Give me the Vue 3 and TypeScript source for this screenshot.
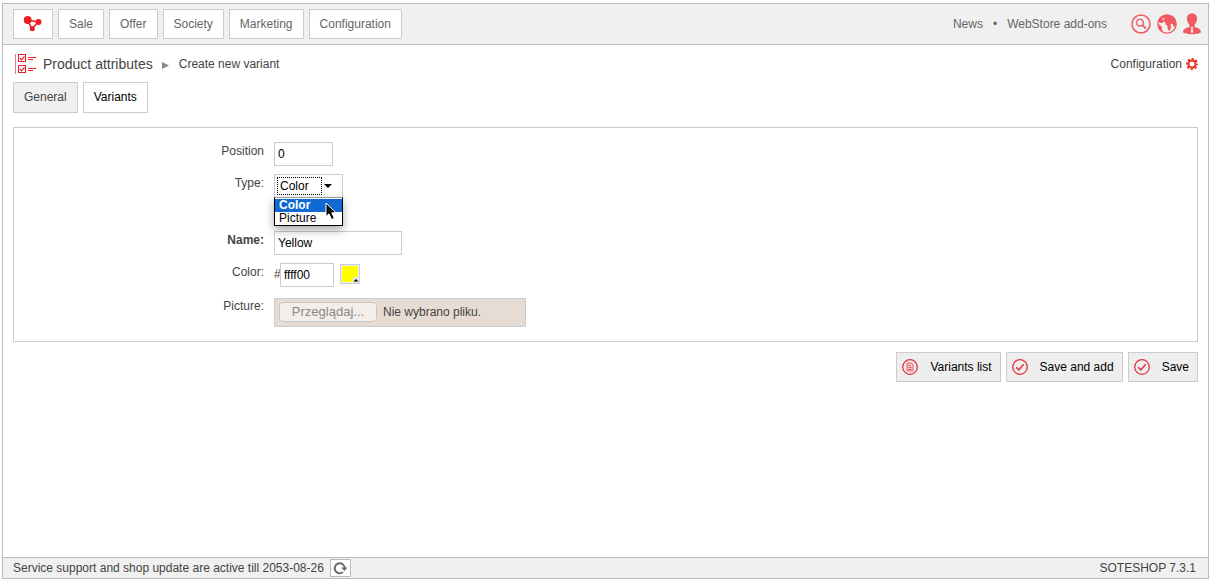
<script setup lang="ts">
import { ref } from 'vue'

const menu: string[] = ['Sale', 'Offer', 'Society', 'Marketing', 'Configuration']
const types: string[] = ['Color', 'Picture']

const position = ref('0')
const type = ref('Color')
const open = ref(true)
const name = ref('Yellow')
const color = ref('ffff00')

function choose(option: string): void {
  type.value = option
  open.value = false
}
</script>

<template>
  <div class="page">
    <div class="frame">
      <header class="topbar">
        <nav class="menu" aria-label="Main">
          <a class="menu-item logo" href="#" aria-label="Home">
            <svg width="20" height="16" viewBox="0 0 20 16">
              <path d="M4 4L15.500 6L9 12.500Z" fill="none" stroke="#ec1c24" stroke-width="1.500" />
              <circle cx="4.700" cy="4" r="3.900" fill="#ec1c24" />
              <circle cx="15.500" cy="6" r="3" fill="#ec1c24" />
              <circle cx="9.300" cy="12.700" r="2.500" fill="#ec1c24" />
            </svg>
          </a>
          <a v-for="item in menu" :key="item" class="menu-item" href="#">{{ item }}</a>
        </nav>
        <div class="tools">
          <a href="#">News</a>
          <span class="dot">•</span>
          <a href="#">WebStore add-ons</a>
          <div class="tool-icons">
            <button type="button" aria-label="Search">
              <svg width="20" height="20" viewBox="0 0 20 20" fill="none" stroke="#f05a60">
                <circle cx="10" cy="10" r="9" stroke-width="1.500" />
                <circle cx="9" cy="8.700" r="3.300" stroke-width="1.300" />
                <path d="M11.400 11.200L14.800 14.500" stroke-width="1.800" />
              </svg>
            </button>
            <button type="button" aria-label="Language">
              <svg width="20" height="20" viewBox="0 0 20 20">
                <circle cx="10" cy="10" r="9.200" fill="#f4f0f0" stroke="#f05a60" stroke-width="1.300" />
                <path d="M2 6C5 0 14 -1 18 5L19.300 10L18.500 12L16.800 13L16 10.500L14.500 9.500L13.500 11L14.300 13.500L12.500 17L10.800 15.500L10.500 12L8.500 10.500L8.500 8.500L7 7.500L5.500 9L3 9L1.500 8Z" fill="#f05a60" />
                <path d="M1 10L3 11L5 13.500L4.800 15.500L6.500 18L3 16Z" fill="#f05a60" />
                <path d="M5 4.500L7.500 4L6.500 6.500Z" fill="#f4f0f0" />
              </svg>
            </button>
            <button type="button" aria-label="Account">
              <svg width="18" height="22" viewBox="0 0 18 22">
                <path d="M9 .5C12.800.5 14.500 3 14 6.500C13.700 9 12.500 10.500 11.500 12L11.700 14C15 15 17.700 16 17.900 19C17.500 21.900 .5 21.900 .1 19C.3 16 3 15 6.300 14L6.500 12C5.500 10.500 4.300 9 4 6.500C3.500 3 5.200.5 9 .5Z" fill="#f05a60" />
                <path d="M7.500 14.500L9 13.800L10.500 14.500L9.600 15.500L10.100 19L9 20.500L7.900 19L8.400 15.500Z" fill="#f7f0f0" />
              </svg>
            </button>
          </div>
        </div>
      </header>

      <main class="content">
        <div class="heading">
          <svg class="attr-icon" width="22" height="22" viewBox="0 0 22 22" fill="none" stroke="#ec1c24">
            <path d="M.5 1V21" stroke="#f4777c" />
            <rect x="3.500" y="1.500" width="7" height="7" />
            <rect x="3.500" y="12.500" width="7" height="7" />
            <path d="M5 5L6.600 6.800L9.500 3.300M5 16L6.600 17.800L9.500 14.300" stroke-width="1.200" />
            <path d="M13 4.500H21M13 15.500H21" />
            <path d="M13 6.500H18M13 17.500H18" />
          </svg>
          <h1>Product attributes</h1>
          <svg class="arrow" width="7" height="7" viewBox="0 0 7 7"><path d="M0 0L7 3.500L0 7Z" fill="#888" /></svg>
          <span>Create new variant</span>
          <a class="config" href="#">
            Configuration
            <svg width="12" height="12" viewBox="0 0 12 12" fill="none" stroke="#ee2a24">
              <circle cx="6" cy="6" r="3.500" stroke-width="2" />
              <circle cx="6" cy="6" r="5.200" stroke-width="1.800" stroke-dasharray="2.200 1.884" stroke-dashoffset="1.100" />
            </svg>
          </a>
        </div>

        <nav class="tabs" aria-label="Sections">
          <a class="tab" href="#">General</a>
          <a class="tab active" href="#" aria-current="page">Variants</a>
        </nav>

        <form id="variant" class="panel" @submit.prevent>
          <div class="row">
            <label for="position">Position</label>
            <input id="position" v-model="position" class="box short" type="text" />
          </div>
          <div class="row type-row">
            <label for="type">Type:</label>
            <div class="dropdown">
              <select id="type" v-model="type" class="box" @mousedown.prevent="open = !open">
                <option v-for="option in types" :key="option">{{ option }}</option>
              </select>
              <span class="focus-ring"></span>
              <svg class="caret" width="8" height="4" viewBox="0 0 8 4"><path d="M0 0H8L4 4Z" /></svg>
              <ul v-if="open" class="options" role="listbox" aria-label="Type">
                <li
                  v-for="option in types"
                  :key="option"
                  role="option"
                  :aria-selected="option === type"
                  :class="{ selected: option === type }"
                  @click="choose(option)"
                >{{ option }}</li>
              </ul>
              <svg v-if="open" class="pointer" width="13" height="19" viewBox="0 0 13 19">
                <path d="M1 1V14.500L4 11.800L6.600 17.500L9.300 16.300L6.800 10.800H11Z" fill="#000" stroke="#fff" />
              </svg>
            </div>
          </div>
          <div class="row">
            <label class="required" for="name">Name:</label>
            <input id="name" v-model="name" class="box long" type="text" />
          </div>
          <div class="row">
            <label for="color">Color:</label>
            <div class="color-field">
              <span class="hash">#</span>
              <input id="color" v-model="color" class="box hex" type="text" />
              <button class="swatch" type="button" aria-label="Pick a color">
                <svg width="18" height="18" viewBox="0 0 18 18">
                  <rect x="1" y="1" width="16" height="16" :fill="'#' + color" />
                  <rect x="12" y="12" width="6" height="6" fill="#e4e6ec" />
                  <path d="M12.500 16.500H17.500L15 14Z" fill="#000" />
                </svg>
              </button>
            </div>
          </div>
          <div class="row picture-row">
            <label for="picture">Picture:</label>
            <label class="file" for="picture">
              <input id="picture" type="file" disabled />
              <span class="browse">Przeglądaj...</span>
              <span>Nie wybrano pliku.</span>
            </label>
          </div>
        </form>

        <div class="actions">
          <button type="button">
            <svg width="16" height="16" viewBox="0 0 16 16" fill="none" stroke="#e6303a">
              <circle cx="8" cy="8" r="7.300" stroke-width="1.300" />
              <path d="M5 4H9.500L11 5.500V12H5Z" fill="#f8c8ca" stroke="#ea5a62" />
              <path d="M6.500 6.500H8.500M6.500 8.500H9.500M6.500 10.500H9.500" stroke-width=".8" />
            </svg>
            Variants list
          </button>
          <button v-for="caption in ['Save and add', 'Save']" :key="caption" type="submit" form="variant">
            <svg width="16" height="16" viewBox="0 0 16 16" fill="none" stroke="#e6303a">
              <circle cx="8" cy="8" r="7.300" stroke-width="1.300" />
              <path d="M4.300 8.200L6.800 10.900L11.700 5.300" stroke-width="1.500" />
            </svg>
            {{ caption }}
          </button>
        </div>
      </main>

      <footer class="footer">
        <span>Service support and shop update are active till 2053-08-26</span>
        <button type="button" aria-label="Refresh">
          <svg width="15" height="14" viewBox="0 0 15 14">
            <path d="M10 11.100A5 5 0 1 1 11.700 7" fill="none" stroke="#666" stroke-width="1.900" />
            <path d="M8.300 6.500H14.500L11.400 10Z" fill="#666" />
          </svg>
        </button>
        <span class="version">SOTESHOP 7.3.1</span>
      </footer>
    </div>
  </div>
</template>

<style>
body {
  background: #fff;
}
</style>

<style scoped>
.page,
.page * {
  box-sizing: border-box;
}
.page {
  min-height: 100vh;
  padding: 3px 2px;
  display: flex;
  font: 12px/16px "Liberation Sans", Arial, sans-serif;
  color: #444;
}
svg {
  display: block;
  flex: none;
}
a {
  color: inherit;
  text-decoration: none;
}
button {
  margin: 0;
  font: inherit;
  cursor: pointer;
}
.frame {
  flex: 1;
  display: flex;
  flex-direction: column;
  border: 1px solid #bbb;
}
.topbar {
  display: flex;
  justify-content: space-between;
  align-items: center;
  padding: 5px 7px 5px 10px;
  background: #f0f0f0;
  border-bottom: 1px solid #bbb;
  color: #666;
}
.menu,
.tabs {
  display: flex;
  gap: 5px;
}
.menu-item {
  height: 30px;
  padding: 6px 10px;
  background: #fff;
  border: 1px solid #ccc;
}
.menu-item.logo {
  padding: 6px 9px;
}
.tools,
.tool-icons {
  display: flex;
  align-items: center;
}
.dot {
  margin: 0 10px;
}
.tool-icons {
  margin-left: 24px;
  gap: 6px;
}
.tool-icons button {
  padding: 0;
  border: 0;
  background: none;
}
.content {
  flex: 1;
  padding: 8px 10px;
}
.heading {
  display: flex;
  align-items: center;
  height: 22px;
  padding-left: 2px;
}
h1 {
  margin: 0 0 0 6px;
  font-size: 14px;
  font-weight: normal;
}
.arrow {
  margin: 2px 10px 0 9px;
}
.config {
  display: flex;
  align-items: center;
  gap: 4px;
  margin-left: auto;
}
.tabs {
  margin-top: 7px;
}
.tab {
  height: 31px;
  padding: 6px 10px;
  border: 1px solid #ccc;
  background: #f0f0f0;
}
.tab.active {
  background: #fff;
  color: #000;
}
.panel {
  display: flex;
  flex-direction: column;
  gap: 8px;
  margin-top: 14px;
  padding: 14px 0;
  border: 1px solid #ccc;
}
.row {
  display: grid;
  grid-template-columns: 250px 1fr;
  column-gap: 10px;
  align-items: start;
  justify-items: start;
}
.row > label:first-child {
  justify-self: end;
  padding-top: 1px;
}
.type-row {
  margin-bottom: 25px;
}
.picture-row {
  margin-top: 3px;
}
.row.picture-row > label:first-child {
  padding-top: 0;
}
.required {
  font-weight: bold;
}
.box {
  height: 24px;
  margin: 0;
  padding: 0 3px;
  border: 1px solid #ccc;
  border-radius: 0;
  outline: 0;
  background: #fff;
  color: #000;
  font: inherit;
}
.short {
  width: 59px;
}
.long {
  width: 128px;
}
.hex {
  width: 54px;
}
.dropdown {
  position: relative;
}
.dropdown select {
  display: block;
  width: 69px;
  padding-left: 5px;
  appearance: none;
}
.focus-ring {
  position: absolute;
  left: 3px;
  top: 3px;
  width: 45px;
  height: 18px;
  border: 1px dotted #000;
  pointer-events: none;
}
.caret {
  position: absolute;
  left: 50px;
  top: 10px;
  pointer-events: none;
}
.options {
  position: absolute;
  z-index: 1;
  top: 23px;
  left: 0;
  width: 69px;
  margin: 0;
  padding: 1px 0 0;
  list-style: none;
  background: #fff;
  border: 1px solid #000;
  border-top-color: #999;
  box-shadow: 0 4px 10px rgba(0, 0, 0, 0.35);
  color: #000;
  line-height: 13px;
}
.options li {
  padding: 0 4px;
}
.options .selected {
  background: #1169d3;
  color: #fff;
  font-weight: bold;
}
.pointer {
  position: absolute;
  z-index: 2;
  left: 51px;
  top: 28px;
  pointer-events: none;
}
.color-field {
  display: flex;
}
.hash {
  width: 6px;
  padding-top: 3px;
}
.swatch {
  width: 20px;
  height: 20px;
  margin: 1px 0 0 6px;
  padding: 0;
  border: 1px solid #ccd;
  background: #eef;
}
.file {
  position: relative;
  display: flex;
  align-items: center;
  gap: 6px;
  width: 252px;
  height: 29px;
  padding: 0 4px 1px;
  background: #e6dcd3;
  border: 1px solid #ccc;
}
.file input {
  position: absolute;
  width: 1px;
  height: 1px;
  opacity: 0;
}
.browse {
  width: 98px;
  height: 20px;
  border: 1px solid #cdc5bf;
  border-radius: 4px;
  background: #f3eeea;
  color: #888;
  font-size: 13px;
  line-height: 18px;
  text-align: center;
}
.actions {
  display: flex;
  justify-content: flex-end;
  gap: 5px;
  margin-top: 10px;
}
.actions button {
  display: flex;
  align-items: center;
  gap: 12px;
  height: 30px;
  padding: 0 8px 0 5px;
  border: 1px solid #ccc;
  background: #eee;
  color: #000;
}
.footer {
  display: flex;
  align-items: center;
  gap: 6px;
  padding: 1px 12px 1px 10px;
  background: #f0f0f0;
  border-top: 1px solid #bbb;
}
.footer button {
  display: flex;
  align-items: center;
  justify-content: center;
  width: 21px;
  height: 18px;
  padding: 0;
  border: 1px solid #bbb;
  background: #fff;
}
.version {
  margin-left: auto;
}
</style>
